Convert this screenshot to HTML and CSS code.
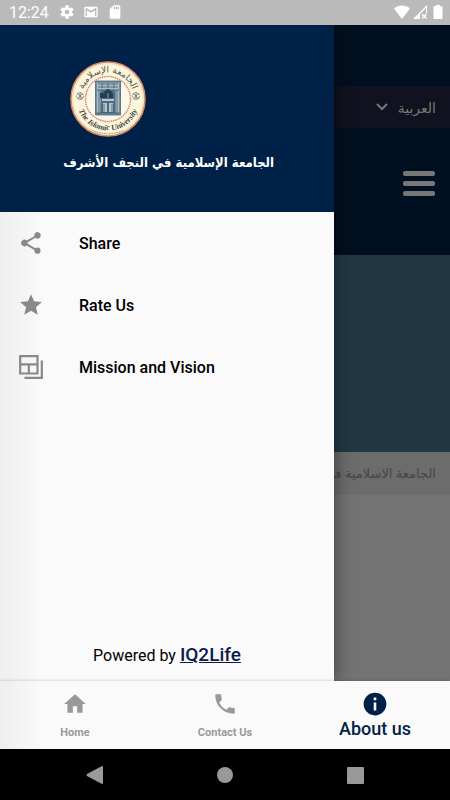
FILE: index.html
```html
<!DOCTYPE html>
<html lang="en">
<head>
<meta charset="utf-8">
<meta name="viewport" content="width=device-width, initial-scale=1">
<title>Islamic University</title>
<link rel="stylesheet" href="styles.css">
</head>
<body>
<header class="status">
  <span class="clock">12:24</span>
  <svg class="status-icon" viewBox="0 0 24 24" aria-hidden="true"><path d="M19.400 13a7.500 7.500 0 0 0 0-2l2.100-1.600a.5.5 0 0 0 .1-.7l-2-3.400a.5.5 0 0 0-.6-.2l-2.500 1a7.300 7.300 0 0 0-1.700-1L14.500 2.400a.5.5 0 0 0-.5-.4h-4a.5.5 0 0 0-.5.4l-.4 2.700a7.700 7.700 0 0 0-1.700 1l-2.500-1a.5.5 0 0 0-.6.2l-2 3.400a.5.5 0 0 0 .1.700L4.600 11a8 8 0 0 0 0 2l-2.200 1.600a.5.5 0 0 0-.1.700l2 3.400c.1.200.4.300.6.200l2.500-1c.5.400 1.100.7 1.700 1l.4 2.700c0 .2.200.4.5.4h4c.2 0 .5-.2.500-.4l.4-2.700c.6-.3 1.200-.6 1.700-1l2.500 1c.2.100.5 0 .6-.2l2-3.400a.5.5 0 0 0-.1-.7zM12 15.500a3.500 3.500 0 1 1 0-7 3.500 3.500 0 0 1 0 7z"/></svg>
  <svg class="status-icon" viewBox="0 0 24 24" aria-hidden="true"><path d="M20 4H4a2 2 0 0 0-2 2v12a2 2 0 0 0 2 2h16a2 2 0 0 0 2-2V6a2 2 0 0 0-2-2zm0 14h-2V9.200l-6 3.800-6-3.800V18H4V6h1.200l6.800 4.200L18.800 6H20z"/></svg>
  <svg class="status-icon" viewBox="0 0 24 24" aria-hidden="true"><path d="M18 2h-8L4 8v12c0 1.100.9 2 2 2h12a2 2 0 0 0 2-2V4a2 2 0 0 0-2-2zm-6 6h-2V4h2zm3 0h-2V4h2zm3 0h-2V4h2z"/></svg>
  <span class="signals">
    <svg class="status-icon" viewBox="0 0 16 16" aria-hidden="true"><path d="M8 15 0 4.500C4 .5 12 .5 16 4.500z"/></svg>
    <svg class="status-icon" viewBox="0 0 16 16" aria-hidden="true"><path fill-rule="evenodd" d="M1 15 15 1v8h-1V4L8 10v5z"/><path d="m10 10 4.500 4.500m0-4.500L10 14.500" fill="none" stroke="#fff" stroke-width="1.500"/></svg>
    <svg class="status-icon" viewBox="0 0 16 16" aria-hidden="true"><path d="M6 1h4v1h1.500q1 0 1 1v11q0 1-1 1h-7q-1 0-1-1V3q0-1 1-1H6z"/></svg>
  </span>
</header>

<div class="stage">
  <main class="page" dir="rtl" lang="ar">
    <div class="page-top"></div>
    <button class="language" type="button">العربية
      <svg class="chevron" viewBox="0 0 12 8" aria-hidden="true"><path d="m1 1 5 5 5-5"/></svg>
    </button>
    <div class="page-head">
      <button class="menu" type="button" aria-label="القائمة"><i></i><i></i><i></i></button>
    </div>
    <div class="banner"></div>
    <div class="crumb">الجامعة الاسلامية في النجف الأشرف</div>
  </main>

  <aside class="drawer">
    <div class="drawer-head">
      <svg class="seal" viewBox="0 0 76 76" role="img" aria-label="The Islamic University">
        <defs>
          <path id="upper-arc" d="M11.500 38a26.500 26.500 0 0 1 53 0"/>
          <path id="lower-arc" d="M6.500 38a31.500 31.500 0 0 0 63 0"/>
        </defs>
        <circle cx="38" cy="38" r="37" fill="#fbf6dc" stroke="#dc8c62" stroke-width="1.600"/>
        <circle cx="38" cy="38" r="35.300" fill="none" stroke="#f0c89f" stroke-width=".7"/>
        <circle cx="38" cy="38" r="22.500" fill="#fdf9e9" stroke="#d58b7c" stroke-width="1.500" stroke-dasharray="1.500 .7"/>
        <text class="seal-ar"><textPath href="#upper-arc" startOffset="50%" text-anchor="middle">الجامعة الإسلامية</textPath></text>
        <text class="seal-en"><textPath href="#lower-arc" startOffset="50%" text-anchor="middle">The Islamic University</textPath></text>
        <g fill="none" stroke="#77776e" stroke-width=".9">
          <circle cx="10" cy="35" r="3.400" stroke-dasharray="2 1"/><path d="m7 32 6 6m0-6-6 6M10 31v8"/>
          <circle cx="66" cy="35" r="3.400" stroke-dasharray="2 1"/><path d="m63 32 6 6m0-6-6 6M66 31v8"/>
        </g>
        <path fill="#7590a0" d="M25.500 20h25v34h-25z"/>
        <path fill="#a9bcc2" d="M27 22h22v6H27zM27 30h3v22h-3zM46 30h3v22h-3z"/>
        <path fill="#4d6d82" d="M31 29h14v23H31z"/>
        <path fill="#b6c5c6" d="M32 38h12v2H32zM33 42h4v9h-4zM39 42h4v9h-4z"/>
        <path fill="#263e55" d="M33 37v-4q3-5 5-5t5 5v4h-4v-5h-2v5zM30 32h3v5h-3z"/>
        <path fill="none" stroke="#38546a" stroke-width=".7" d="M25.500 20h25v34h-25zM28 23h20M28 26h20M29 29v24M47 29v24M34 43v8M42 43v8M26 52h24M32 22v5M38 22v5M44 22v5"/>
        <path fill="none" stroke="#9a987f" stroke-width="1" stroke-dasharray="1.500 1" d="M22 69.500q16 6 32 0"/>
      </svg>
      <h1 class="university" dir="rtl" lang="ar">الجامعة الإسلامية في النجف الأشرف</h1>
    </div>
    <nav class="links">
      <a class="link" href="#share"><svg class="link-icon" viewBox="0 0 24 24" aria-hidden="true"><path d="M18 16.100c-.8 0-1.400.3-2 .8l-7.100-4.200a3.300 3.300 0 0 0 0-1.400L16 7.200A3 3 0 1 0 15 5c0 .2 0 .5.100.7L8 9.800a3 3 0 1 0 0 4.400l7.100 4.200-.1.600a2.900 2.900 0 1 0 3-2.900z"/></svg>Share</a>
      <a class="link" href="#rate"><svg class="link-icon" viewBox="0 0 24 24" aria-hidden="true"><path d="m12 17.300 6.200 3.700-1.600-7L22 9.200l-7.200-.6L12 2 9.200 8.600 2 9.200 7.500 14l-1.700 7z"/></svg>Rate Us</a>
      <a class="link" href="#mission"><svg class="link-icon" viewBox="0 0 24 24" aria-hidden="true"><path fill="none" stroke="#888" stroke-width="2" d="M2 2h16v16H2zM2 9.500h16M10 9.500V18M22 6v16H6"/></svg>Mission and Vision</a>
    </nav>
    <p class="credit">Powered by <a class="credit-link" href="#iq2life">IQ2Life</a></p>
  </aside>
</div>

<nav class="tabs">
  <a class="tab" href="#home"><svg class="tab-icon" viewBox="0 0 24 24" aria-hidden="true"><path d="M10 20v-6h4v6h5v-8h3L12 3 2 12h3v8z"/></svg>Home</a>
  <a class="tab" href="#contact"><svg class="tab-icon" viewBox="0 0 24 24" aria-hidden="true"><path d="M6.600 10.800a15.100 15.100 0 0 0 6.600 6.600l2.200-2.200c.3-.3.700-.4 1-.2 1.100.4 2.300.6 3.600.6.600 0 1 .4 1 1V20c0 .6-.4 1-1 1A17 17 0 0 1 3 4c0-.6.5-1 1-1h3.500c.6 0 1 .4 1 1 0 1.300.2 2.500.6 3.600.1.300 0 .7-.3 1z"/></svg>Contact Us</a>
  <a class="tab tab-active" href="#about" aria-current="page"><svg class="tab-icon" viewBox="0 0 24 24" aria-hidden="true"><path fill-rule="evenodd" d="M12 1.500a10.500 10.500 0 1 0 0 21 10.500 10.500 0 0 0 0-21zm1.200 16.500h-2.400v-7.500h2.400zm0-9.500h-2.400V6h2.400z"/></svg>About us</a>
</nav>

<footer class="system">
  <button class="key" type="button" aria-label="Back"><svg class="key-icon" viewBox="0 0 18 18" aria-hidden="true"><path d="M16 0q1 0 1 1v16q0 1-1 1L1 10q-1-1 0-2z"/></svg></button>
  <button class="key" type="button" aria-label="Home"><svg class="key-icon" viewBox="0 0 18 18" aria-hidden="true"><circle cx="9" cy="9" r="8"/></svg></button>
  <button class="key" type="button" aria-label="Recents"><svg class="key-icon" viewBox="0 0 18 18" aria-hidden="true"><rect x="1" y="1" width="17" height="17" rx="1"/></svg></button>
</footer>
</body>
</html>
```
FILE: styles.css
```css
* { box-sizing: border-box; }

body {
  margin: 0;
  min-height: 100vh;
  display: flex;
  flex-direction: column;
  background: #fafafa;
  font-family: Roboto, "Liberation Sans", sans-serif;
}

a { color: inherit; text-decoration: none; }
button { border: 0; padding: 0; background: none; font: inherit; color: inherit; }
svg { display: block; }

.status {
  position: relative;
  z-index: 1;
  height: 25px;
  padding: 0 4px 1px 9px;
  display: flex;
  align-items: center;
  gap: 8px;
  background: #bababa;
  color: #fff;
  font-size: 16px;
}
.clock { margin-right: 2px; }
.status-icon { width: 16px; height: 16px; fill: #fff; }
.signals { margin-left: auto; display: flex; gap: 2px; }

.stage {
  flex: 1;
  position: relative;
  display: flex;
}

.page {
  flex: 1;
  display: flex;
  flex-direction: column;
  background: #737373;
  font-family: "Noto Sans", "DejaVu Sans", sans-serif;
  font-size: 14px;
}
.page-top { height: 61px; background: #000f20; }
.language {
  height: 42px;
  padding: 0 14px;
  display: flex;
  align-items: center;
  gap: 10px;
  background: #10121f;
  color: #777;
}
.chevron { width: 12px; height: 8px; fill: none; stroke: #777; stroke-width: 2; }
.page-head {
  height: 127px;
  padding: 43px 15px;
  background: #000f20;
}
.menu { display: flex; flex-direction: column; gap: 5px; }
.menu i { width: 32px; height: 5px; border-radius: 2px; background: #777; }
.banner { height: 197px; background: #213843; }
.crumb {
  height: 43px;
  padding: 0 14px;
  background: #6c6c6c;
  color: #464646;
  font-size: 13px;
  line-height: 43px;
}

.drawer {
  position: absolute;
  inset: 0 auto 0 0;
  width: 334px;
  display: flex;
  flex-direction: column;
  background: linear-gradient(90deg, #eee, #fafafa 44px);
  box-shadow: 2px 0 16px rgba(0, 0, 0, .4);
}
.drawer-head {
  height: 187px;
  padding: 36px 60px 0 70px;
  background: #002147;
  color: #fff;
}
.seal { width: 76px; height: 76px; }
.seal-ar { font: 9px "DejaVu Sans", sans-serif; fill: #55554d; }
.seal-en { font: italic bold 8px "Liberation Serif", serif; fill: #44443e; }
.university {
  margin: 16px 0 0;
  font: bold 13px/20px "DejaVu Sans Condensed", "DejaVu Sans", sans-serif;
  text-align: left;
  white-space: nowrap;
}
.links { display: flex; flex-direction: column; }
.link {
  height: 62px;
  padding-left: 18px;
  display: flex;
  align-items: center;
  gap: 35px;
  color: #000;
  font-size: 16px;
  font-weight: 500;
}
.link-icon { width: 26px; height: 26px; fill: #888; }
.credit {
  margin: auto 0 13px;
  text-align: center;
  font-size: 16px;
  line-height: 24px;
}
.credit-link { color: #0b1c4c; font-size: 19px; font-weight: 500; text-decoration: underline; }

.tabs {
  position: relative;
  height: 68px;
  display: flex;
  background: linear-gradient(90deg, #eee, #fafafa 44px);
  box-shadow: 0 -1px 2px rgba(0, 0, 0, .12);
}
.tab {
  flex: 1;
  padding-top: 10px;
  display: flex;
  flex-direction: column;
  align-items: center;
  gap: 8px;
  color: #999;
  font-size: 11px;
  font-weight: 700;
  line-height: 16px;
}
.tab-icon { width: 26px; height: 26px; fill: currentColor; }
.tab-active { gap: 0; color: #002147; font-size: 18px; font-weight: 500; line-height: 24px; }

.system {
  height: 51px;
  padding: 0 30px;
  display: flex;
  background: #000;
}
.key { flex: 1; display: flex; align-items: center; justify-content: center; }
.key-icon { width: 18px; height: 18px; fill: #999; }
```
